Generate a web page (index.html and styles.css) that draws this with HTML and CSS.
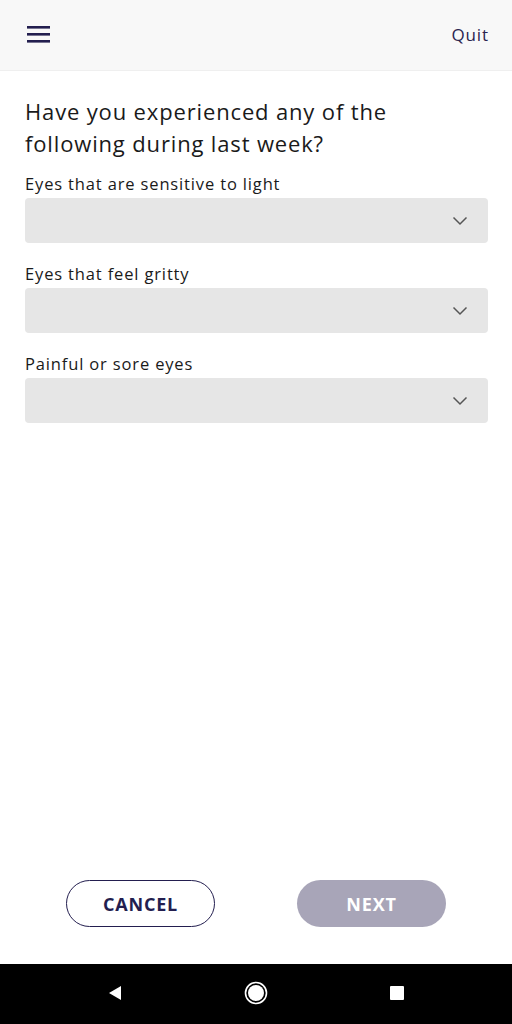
FILE: index.html
```html
<!DOCTYPE html>
<html>
<head>
<meta charset="utf-8">
<link rel="stylesheet" href="styles.css">
</head>
<body>
<div class="app">
  <header class="topbar">
    <button class="menu" aria-label="Menu">
      <svg width="24" height="18" viewBox="0 0 24 18"><rect x="0" y="1" width="23" height="2.6" fill="#231e4f"/><rect x="0" y="8" width="23" height="2.6" fill="#231e4f"/><rect x="0" y="15" width="23" height="2.6" fill="#231e4f"/></svg>
    </button>
    <span class="quit">Quit</span>
  </header>
  <main class="content">
    <h1 class="title">Have you experienced any of the following during last week?</h1>
    <div class="field">
      <label class="label">Eyes that are sensitive to light</label>
      <div class="select"><svg class="chev" width="16" height="10" viewBox="0 0 16 10"><path d="M1.5 1.5 L8 8 L14.5 1.5" fill="none" stroke="#555" stroke-width="1.5"/></svg></div>
    </div>
    <div class="field">
      <label class="label">Eyes that feel gritty</label>
      <div class="select"><svg class="chev" width="16" height="10" viewBox="0 0 16 10"><path d="M1.5 1.5 L8 8 L14.5 1.5" fill="none" stroke="#555" stroke-width="1.5"/></svg></div>
    </div>
    <div class="field">
      <label class="label">Painful or sore eyes</label>
      <div class="select"><svg class="chev" width="16" height="10" viewBox="0 0 16 10"><path d="M1.5 1.5 L8 8 L14.5 1.5" fill="none" stroke="#555" stroke-width="1.5"/></svg></div>
    </div>
  </main>
  <div class="actions">
    <button class="btn btn-outline">CANCEL</button>
    <button class="btn btn-disabled">NEXT</button>
  </div>
  <nav class="sysnav">
    <svg width="16" height="18" viewBox="0 0 16 18"><path d="M14 2 L2 9 L14 16 Z" fill="#fff"/></svg>
    <svg width="24" height="24" viewBox="0 0 24 24"><circle cx="12" cy="12" r="10.5" fill="none" stroke="#fff" stroke-width="1.6"/><circle cx="12" cy="12" r="8" fill="#fff"/></svg>
    <svg width="16" height="16" viewBox="0 0 16 16"><rect x="1" y="1" width="14" height="14" rx="1" fill="#fff"/></svg>
  </nav>
</div>
</body>
</html>
```
FILE: styles.css
```css
* { box-sizing: border-box; }
html, body { margin: 0; padding: 0; }
body {
  font-family: "Open Sans", "DejaVu Sans", sans-serif;
  color: #1a1a1a;
  background: #fff;
}
.app {
  width: 512px;
  height: 1024px;
  display: flex;
  flex-direction: column;
}
.topbar {
  height: 71px;
  flex: none;
  background: #f8f8f8;
  border-bottom: 1px solid #efefef;
  display: flex;
  align-items: center;
  justify-content: space-between;
  padding: 0 23px 0 27px;
}
.menu {
  border: 0;
  background: none;
  padding: 0;
  display: flex;
  margin-top: -2px;
}
.quit {
  font-size: 17px;
  color: #2a2550;
  margin-top: -1px;
  letter-spacing: 0.9px;
}
.content {
  flex: 1;
  padding: 0 24px 0 25px;
}
.title {
  font-weight: 400;
  font-size: 22px;
  line-height: 32px;
  margin: 0;
  padding-top: 24px;
  color: #1a1a1a;
  letter-spacing: 0.85px;
}
.field {
  display: flex;
  flex-direction: column;
}
.label {
  font-size: 16.5px;
  line-height: 22px;
  margin-top: 14px;
  margin-bottom: 3px;
  letter-spacing: 0.85px;
}
.field + .field .label { margin-top: 20px; }
.select {
  height: 45px;
  background: #e6e6e6;
  border-radius: 4px;
  display: flex;
  align-items: center;
  justify-content: flex-end;
  padding-right: 20px;
}
.chev { display: block; }
.actions {
  flex: none;
  display: flex;
  justify-content: center;
  gap: 82px;
  padding-bottom: 37px;
}
.btn {
  width: 149px;
  height: 47px;
  border-radius: 24px;
  font-family: "Open Sans", "DejaVu Sans", sans-serif;
  font-weight: 700;
  font-size: 18px;
  letter-spacing: 0.8px;
}
.btn-outline {
  background: #fff;
  border: 1.5px solid #231e4f;
  color: #231e4f;
}
.btn-disabled {
  background: #a8a5b8;
  border: 0;
  color: #fff;
}
.sysnav {
  flex: none;
  height: 60px;
  background: #000;
  display: flex;
  align-items: center;
  justify-content: center;
  gap: 121px;
  padding-bottom: 2px;
}
```
